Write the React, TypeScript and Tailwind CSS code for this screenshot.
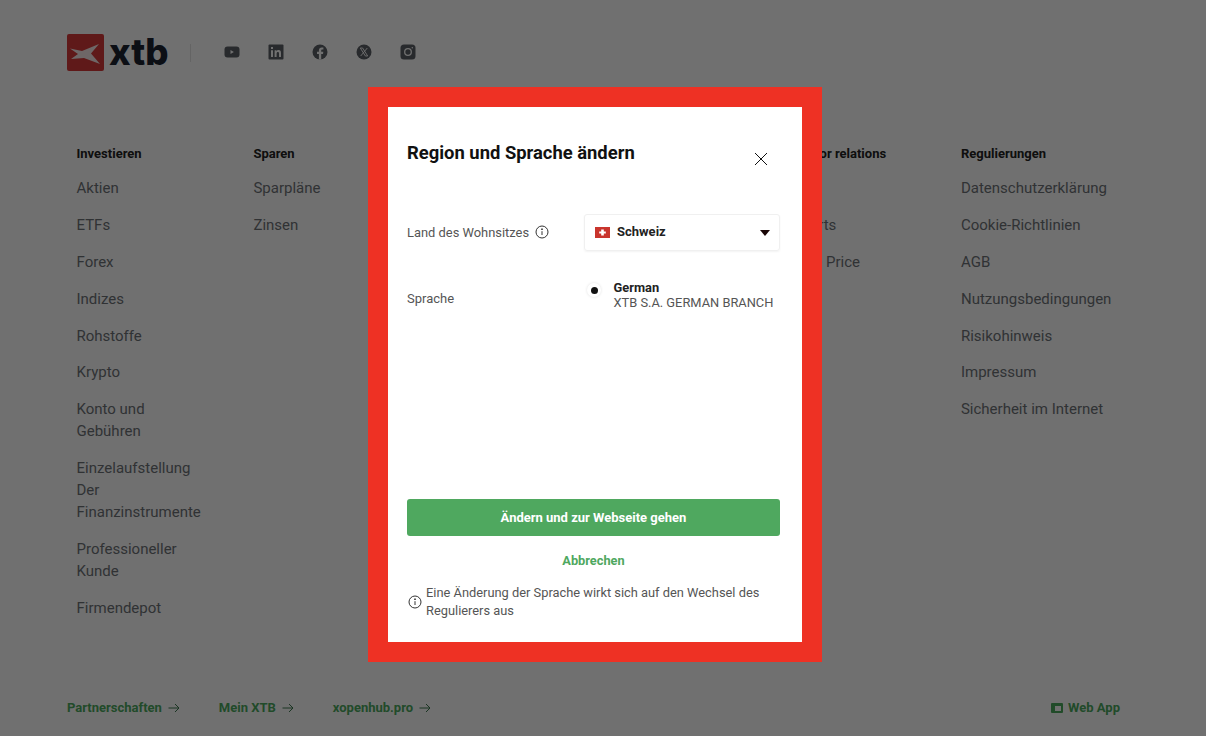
import { useState } from "react";

const columns = [
  {
    title: "Investieren",
    links: ["Aktien", "ETFs", "Forex", "Indizes", "Rohstoffe", "Krypto", "Konto und Gebühren", "Einzelaufstellung Der Finanzinstrumente", "Professioneller Kunde", "Firmendepot"],
  },
  { title: "Sparen", links: ["Sparpläne", "Zinsen"] },
  { title: "", links: [] },
  { title: "", links: [] },
  { title: "Investor relations", links: ["Aktie", "Reports", "Share Price"] },
  {
    title: "Regulierungen",
    links: ["Datenschutzerklärung", "Cookie-Richtlinien", "AGB", "Nutzungsbedingungen", "Risikohinweis", "Impressum", "Sicherheit im Internet"],
  },
];

function InfoIcon() {
  return (
    <svg width="14" height="14" viewBox="0 0 14 14" fill="none" stroke="#333333" strokeWidth="1" className="shrink-0">
      <circle cx="7" cy="7" r="6" />
      <path d="M7 6.2V10" />
      <circle cx="7" cy="4.2" r="0.5" fill="#333333" />
    </svg>
  );
}

function ArrowIcon() {
  return (
    <svg width="12" height="10" viewBox="0 0 12 10" fill="none" stroke="#3f7a50" strokeWidth="1">
      <path d="M0.5 5H11M7 1l4 4-4 4" />
    </svg>
  );
}

function Socials() {
  return (
    <div className="-mt-[1px] flex items-center gap-[28px]">
      <svg width="16" height="16" viewBox="0 0 16 16">
        <rect x="0.5" y="2.5" width="15" height="11" rx="3" fill="#5c6066" />
        <path d="M6.5 6v4l3.4-2z" fill="#ffffff" />
      </svg>
      <svg width="16" height="16" viewBox="0 0 16 16">
        <rect x="0.5" y="0.5" width="15" height="15" rx="1" fill="#5c6066" />
        <path d="M3 6.3h2V13H3zM3 3h2v2H3zM6.6 6.3h1.9v1c.4-.7 1.100-1.200 2.100-1.200 1.800 0 2.400 1.100 2.400 2.900v4h-2V9.500c0-.9-.3-1.600-1.100-1.600-.9 0-1.300.7-1.300 1.600V13h-2z" fill="#ffffff" />
      </svg>
      <svg width="16" height="16" viewBox="0 0 16 16">
        <circle cx="8" cy="8" r="7.500" fill="#5c6066" />
        <path d="M9.200 15.400V9.900h1.800l.3-2.100H9.200V6.500c0-.6.3-1.100 1.200-1.100h1V3.600c-.5-.1-1.100-.2-1.700-.2-1.700 0-2.800 1-2.800 2.900v1.500H5v2.100h1.900v5.500z" fill="#ffffff" />
      </svg>
      <svg width="16" height="16" viewBox="0 0 16 16">
        <circle cx="8" cy="8" r="7.500" fill="#5c6066" />
        <path d="M4.300 4h2.300l5.100 8H9.400zM11.300 4 4.700 12" fill="none" stroke="#ffffff" strokeWidth="0.900" />
      </svg>
      <svg width="16" height="16" viewBox="0 0 16 16">
        <rect x="0.500" y="0.500" width="15" height="15" rx="3.500" fill="#5c6066" />
        <circle cx="8" cy="8" r="3.300" fill="none" stroke="#ffffff" strokeWidth="1.300" />
        <circle cx="12.300" cy="3.700" r="0.800" fill="#ffffff" />
      </svg>
    </div>
  );
}

function Logo() {
  return (
    <div className="flex items-center gap-[5px]">
      <svg width="37" height="37" viewBox="0 0 37 37">
        <rect width="37" height="37" rx="2" fill="#d83a3a" />
        <path d="M3 14.500l12 2.500 17-7-8 9.500 9 10.500-16-6-13 1 7-5z" fill="#ffffff" opacity="0.9" />
      </svg>
      <span className="text-[36.500px] font-extrabold leading-none text-[#1c2330] font-['Inter',sans-serif]">xtb</span>
    </div>
  );
}

export default function App() {
  const [lang] = useState("German");

  return (
    <div className="relative flex h-[736px] w-[1206px] flex-col overflow-hidden bg-white font-['Roboto',sans-serif]">
      <header className="mt-[34px] flex h-[37px] items-center pl-[67px]">
        <Logo />
        <div className="ml-[21px] mr-[33px] h-[18px] w-px bg-[#e3e3e3]" />
        <Socials />
      </header>

      <main className="grid grid-cols-[176.900px_176.900px_176.900px_176.900px_176.900px_176.900px] pl-[76.500px] pt-[73px]">
        {columns.map((col, i) => (
          <div key={i} className="flex flex-col">
            <h4 className="mb-[13px] text-[13px] font-bold leading-[20px] text-[#222222]">{col.title}</h4>
            <ul className="flex max-w-[130px] flex-col gap-[14.900px]">
              {col.links.map((link) => (
                <li key={link} className={`text-[15px] leading-[22px] text-[#6f7378] ${i === 5 ? "whitespace-nowrap" : ""}`}>
                  {link}
                </li>
              ))}
            </ul>
          </div>
        ))}
      </main>

      <footer className="mt-auto flex items-center justify-between pb-[19px] pl-[67px] pr-[86px] text-[13px] font-bold leading-[18px] text-[#4caa5f]">
        <div className="flex items-center gap-[39px]">
          <a className="flex items-center gap-[6px]">Partnerschaften <ArrowIcon /></a>
          <a className="flex items-center gap-[6px]">Mein XTB <ArrowIcon /></a>
          <a className="flex items-center gap-[6px]">xopenhub.pro <ArrowIcon /></a>
        </div>
        <a className="flex items-center gap-[5px]">
          <svg width="12" height="10" viewBox="0 0 12 10">
            <path fillRule="evenodd" d="M1 0h10a1 1 0 0 1 1 1v8a1 1 0 0 1-1 1H1a1 1 0 0 1-1-1V1a1 1 0 0 1 1-1zm3 3v5h6V3z" fill="#4caa5f" />
          </svg>
          Web App
        </a>
      </footer>

      <div className="absolute inset-0 bg-black/[0.56]" />

      <div className="absolute left-[368px] top-[87px] h-[575px] w-[454px] border-[20px] border-[#ee3124] bg-white px-[19px] text-[#333333]">
        <div className="flex items-start justify-between pr-[15px] pt-[33px]">
          <h2 className="text-[18.400px] font-bold leading-[26px] text-[#111111]">Region und Sprache ändern</h2>
          <svg width="14" height="14" viewBox="0 0 14 14" fill="none" stroke="#111111" strokeWidth="1" className="mt-[12px]">
            <path d="M1 1l12 12M13 1L1 13" />
          </svg>
        </div>

        <div className="mt-[48px] flex h-[37px] items-center justify-between pr-[3px]">
          <div className="flex items-center gap-[6px] text-[12.900px] text-[#555555]">
            Land des Wohnsitzes <InfoIcon />
          </div>
          <div className="flex h-[37px] w-[196px] items-center rounded-[3px] border border-[#f0f0f0] pl-[10px] pr-[9px] shadow-[0_1px_2px_rgba(0,0,0,0.05)]">
            <svg width="15" height="11" viewBox="0 0 15 11" className="mr-[7px]">
              <rect width="15" height="11" fill="#c9352d" />
              <path d="M6.200 2.500h2.600v2h2v2h-2v2H6.200v-2h-2v-2h2z" fill="#ffffff" />
            </svg>
            <span className="-mt-[1px] text-[13px] font-bold text-[#222222]">Schweiz</span>
            <svg width="10" height="6" viewBox="0 0 10 6" className="ml-auto">
              <path d="M0 0h10L5 6z" fill="#1a0606" />
            </svg>
          </div>
        </div>

        <div className="mt-[29px] flex items-center justify-between pr-[3px]">
          <span className="mt-[8px] text-[13px] text-[#555555]">Sprache</span>
          <div className="flex w-[196px] items-start">
            <span className="ml-[3px] mt-[3px] flex h-[14px] w-[14px] items-center justify-center rounded-full bg-white shadow-[0_0_3px_rgba(0,0,0,0.12)]">
              <span className="h-[7px] w-[7px] rounded-full bg-[#111111]" />
            </span>
            <div className="ml-[12.500px] text-[12.850px] leading-[15px]">
              <div className="font-bold text-[#222222]">{lang}</div>
              <div className="whitespace-nowrap text-[#555555]">XTB S.A. GERMAN BRANCH</div>
            </div>
          </div>
        </div>

        <button className="mt-[189px] block h-[37px] w-[373px] rounded-[3px] bg-[#4fa85f] text-[13px] font-bold text-white">
          Ändern und zur Webseite gehen
        </button>
        <div className="mt-[16px] w-[373px] text-center text-[12.800px] font-bold leading-[18px] text-[#4fa85f]">Abbrechen</div>
        <div className="mt-[14px] flex items-center gap-[4px] pl-[1px] text-[12.850px] leading-[18px] text-[#555555]">
          <InfoIcon />
          <p className="w-[350px]">Eine Änderung der Sprache wirkt sich auf den Wechsel des Regulierers aus</p>
        </div>
      </div>
    </div>
  );
}
